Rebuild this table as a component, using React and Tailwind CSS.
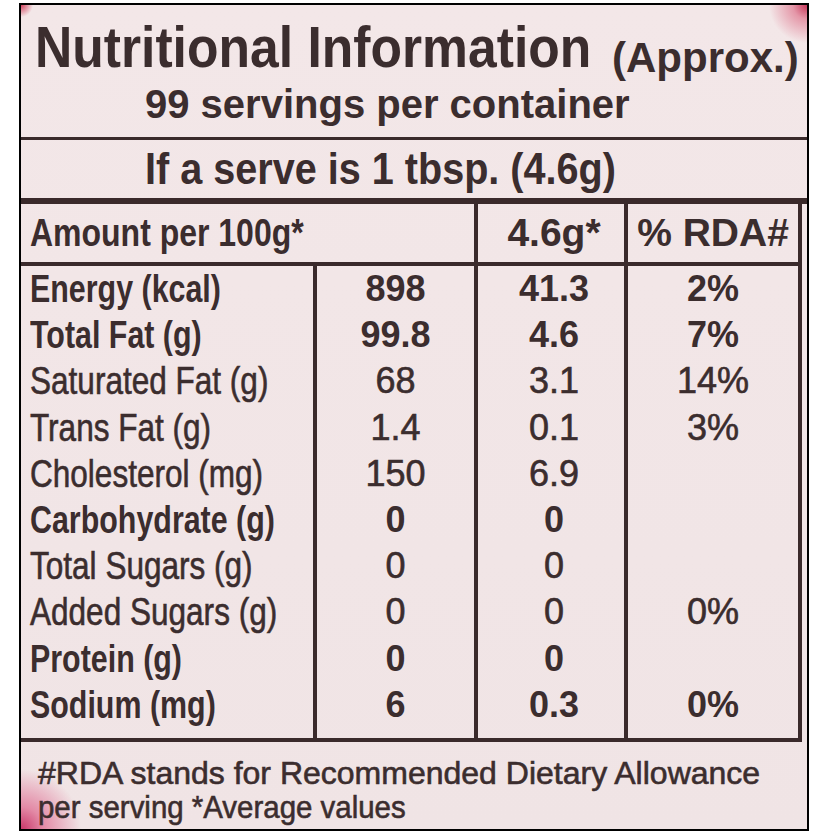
import React from "react";

const rows = [
  { label: "Energy (kcal)", a: "898", b: "41.3", c: "2%", bold: true },
  { label: "Total Fat (g)", a: "99.8", b: "4.6", c: "7%", bold: true },
  { label: "Saturated Fat (g)", a: "68", b: "3.1", c: "14%", bold: false },
  { label: "Trans Fat (g)", a: "1.4", b: "0.1", c: "3%", bold: false },
  { label: "Cholesterol (mg)", a: "150", b: "6.9", c: "", bold: false },
  { label: "Carbohydrate (g)", a: "0", b: "0", c: "", bold: true },
  { label: "Total Sugars (g)", a: "0", b: "0", c: "", bold: false },
  { label: "Added Sugars (g)", a: "0", b: "0", c: "0%", bold: false },
  { label: "Protein (g)", a: "0", b: "0", c: "", bold: true },
  { label: "Sodium (mg)", a: "6", b: "0.3", c: "0%", bold: true },
];

function Cell({ children, bold, center }) {
  return (
    <div
      className={
        "h-[46.2px] flex items-center whitespace-nowrap leading-[38px] " +
        (center ? "justify-center " : "") +
        (bold ? "font-bold" : "font-normal [-webkit-text-stroke:0.6px_#3b2d2e]")
      }
    >
      {children}
    </div>
  );
}

export default function App() {
  return (
    <div className="w-[832px] h-[832px] bg-white font-['Liberation_Sans',Arial,sans-serif] text-[#3b2d2e]">
      <div className="ml-[19px] mt-[3px] w-[790px] h-[828px] border-2 border-black overflow-hidden bg-[radial-gradient(circle_at_0%_100%,#c9386a_0px,#e38aa6_22px,rgba(241,229,230,0)_60px),radial-gradient(circle_at_100%_0%,#c6375a_0px,#e497a8_14px,rgba(241,229,230,0)_38px),radial-gradient(circle_at_0%_0%,#d0405c_0px,rgba(241,229,230,0)_12px),linear-gradient(#f3e7e8,#f0e4e5)]">
        {/* Title */}
        <div className="mt-[10px] h-[64px] pl-[14px] flex items-baseline leading-[64px]">
          <span className="inline-block w-[557px] whitespace-nowrap text-[58px] font-bold">
            <span className="inline-block origin-left scale-x-[0.89]">Nutritional Information</span>
          </span>
          <span className="ml-[20px] translate-y-[5px] text-[42px] font-bold whitespace-nowrap">(Approx.)</span>
        </div>
        <div className="mt-[3px] pl-[124px] text-[40px] font-bold leading-[44px] whitespace-nowrap">
          99 servings per container
        </div>
        <div className="mt-[11px] h-[3px] bg-[#3a2a2b]" />
        <div className="mt-[5px] pl-[124px] text-[45px] font-bold leading-[48px] whitespace-nowrap">
          <span className="inline-block origin-left scale-x-[0.88]">If a serve is 1 tbsp. (4.6g)</span>
        </div>
        <div className="mt-[5px] h-[6px] bg-[#3a2a2b]" />

        {/* Table */}
        <div className="mr-[5px]">
          <div className="flex h-[62px] border-b-4 border-r-4 border-[#3a2a2b] text-[39px] font-bold leading-[40px]">
            <div className="w-[453px] pl-[9px] flex items-center whitespace-nowrap">
              <span className="inline-block origin-left scale-x-[0.82]">Amount per 100g*</span>
            </div>
            <div className="w-[150px] border-l-4 border-[#3a2a2b] flex items-center justify-center pl-[6px] whitespace-nowrap">
              4.6g*
            </div>
            <div className="flex-1 border-l-4 border-[#3a2a2b] flex items-center justify-center whitespace-nowrap">
              % RDA#
            </div>
          </div>

          <div className="flex border-b-4 border-r-4 border-[#3a2a2b]">
            <div className="w-[292px] pl-[9px] pb-[10px] text-[38px]">
              {rows.map((r) => (
                <Cell key={r.label} bold={r.bold}>
                  <span
                    className={
                      "inline-block origin-left " + (r.bold ? "scale-x-[0.8]" : "scale-x-[0.83]")
                    }
                  >
                    {r.label}
                  </span>
                </Cell>
              ))}
            </div>
            <div className="w-[161px] border-l-4 border-[#3a2a2b] pb-[10px] text-[36px]">
              {rows.map((r) => (
                <Cell key={r.label} bold={r.bold} center>
                  {r.a}
                </Cell>
              ))}
            </div>
            <div className="w-[150px] border-l-4 border-[#3a2a2b] pb-[10px] pl-[6px] text-[36px]">
              {rows.map((r) => (
                <Cell key={r.label} bold={r.bold} center>
                  {r.b}
                </Cell>
              ))}
            </div>
            <div className="flex-1 border-l-4 border-[#3a2a2b] pb-[10px] text-[36px]">
              {rows.map((r) => (
                <Cell key={r.label} bold={r.bold} center>
                  {r.c}
                </Cell>
              ))}
            </div>
          </div>
        </div>

        {/* Footer */}
        <div className="mt-[14px] pl-[17px] text-[32px] leading-[34px] whitespace-nowrap [-webkit-text-stroke:0.6px_#3b2d2e]">
          <div>#RDA stands for Recommended Dietary Allowance</div>
          <div>
            <span className="inline-block origin-left scale-x-[0.92]">per serving *Average values</span>
          </div>
        </div>
      </div>
    </div>
  );
}
